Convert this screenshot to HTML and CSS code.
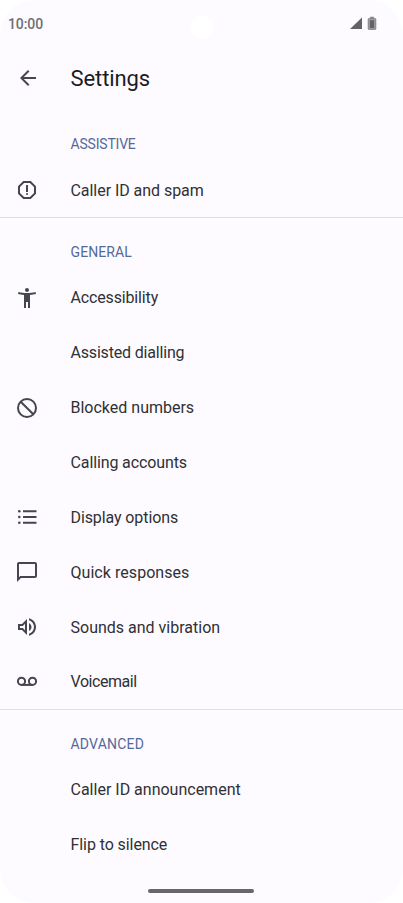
FILE: index.html
```
<!DOCTYPE html>
<html lang="en-GB">
<head>
<meta charset="utf-8">
<title>Settings</title>
<link rel="stylesheet" href="styles.css">
</head>
<body>
<main class="screen">
  <header class="status">
    <span class="time">10:00</span>
    <span class="camera"></span>
    <svg class="indicators" viewBox="0 0 28 14">
      <path d="M0 13 12 1.500v11.500z" fill="#636265"/>
      <path d="M20.200 .800h3.600v1.400h-3.600z" fill="#858487"/>
      <rect x="18.200" y="2.400" width="7.600" height="11.200" rx="1" fill="#9a999c" stroke="#777679" stroke-width=".8"/>
      <path d="M20 4.200h4V12h-4z" fill="#636265"/>
    </svg>
  </header>
  <div class="appbar">
    <svg class="icon" viewBox="0 0 24 24"><path d="M20 11H7.830l5.590-5.590L12 4l-8 8 8 8 1.410-1.410L7.830 13H20z"/></svg>
    <h1>Settings</h1>
  </div>
  <section class="assistive">
    <h2 class="h-assistive">ASSISTIVE</h2>
    <div class="row">
      <svg class="icon" viewBox="0 0 24 24"><path d="M15.730 3H8.270L3 8.270v7.460L8.270 21h7.460L21 15.730V8.270zM19 14.900 14.900 19H9.100L5 14.900V9.100L9.100 5h5.800L19 9.100z"/><circle cx="12" cy="16" r="1"/><path d="M11 7h2v7h-2z"/></svg>
      <span class="t-caller">Caller ID and spam</span>
    </div>
  </section>
  <section class="general">
    <h2 class="h-general">GENERAL</h2>
    <div class="row">
      <svg class="icon" viewBox="0 0 24 24"><path d="M20.500 6c-2.610.700-5.670 1-8.500 1s-5.890-.300-8.500-1L3 8c1.860.500 4 .830 6 1v13h2v-6h2v6h2V9c2-.170 4.140-.500 6-1zM12 6c1.100 0 2-.900 2-2s-.900-2-2-2-2 .900-2 2 .900 2 2 2z"/></svg>
      <span class="t-access">Accessibility</span>
    </div>
    <div class="row"><span class="t-dial">Assisted dialling</span></div>
    <div class="row">
      <svg class="icon" viewBox="0 0 24 24"><g class="line"><circle cx="12" cy="12" r="9"/><path d="m5.700 5.700 12.600 12.600"/></g></svg>
      <span class="t-block">Blocked numbers</span>
    </div>
    <div class="row"><span class="t-accounts">Calling accounts</span></div>
    <div class="row">
      <svg class="icon" viewBox="0 0 24 24"><circle cx="4.300" cy="6.200" r="1.300"/><circle cx="4.300" cy="12" r="1.300"/><circle cx="4.300" cy="17.800" r="1.300"/><path d="M8 5.200h13.500v2H8zM8 11h13.500v2H8zM8 16.800h13.500v2H8z"/></svg>
      <span class="t-display">Display options</span>
    </div>
    <div class="row">
      <svg class="icon" viewBox="0 0 24 24"><path d="M20 2H4c-1.100 0-2 .900-2 2v18l4-4h14c1.100 0 2-.900 2-2V4c0-1.100-.900-2-2-2zm0 14H5.200L4 17.200V4h16z"/></svg>
      <span class="t-quick">Quick responses</span>
    </div>
    <div class="row">
      <svg class="icon" viewBox="0 0 24 24"><path d="M3 9v6h4l5 5V4L7 9zm7-.170v6.340L7.830 13H5v-2h2.830zM16.500 12c0-1.770-1.020-3.290-2.500-4.030v8.050c1.480-.730 2.500-2.250 2.500-4.020zM14 3.230v2.060c2.890.860 5 3.540 5 6.710s-2.110 5.850-5 6.710v2.060c4.010-.910 7-4.490 7-8.770s-2.990-7.860-7-8.770z"/></svg>
      <span class="t-sound">Sounds and vibration</span>
    </div>
    <div class="row">
      <svg class="icon" viewBox="0 0 24 24"><g class="line"><circle cx="6.500" cy="11.300" r="3.600"/><circle cx="17.500" cy="11.300" r="3.600"/><path d="M6.500 14.900h11"/></g></svg>
      <span class="t-voice">Voicemail</span>
    </div>
  </section>
  <section class="advanced">
    <h2 class="h-advanced">ADVANCED</h2>
    <div class="row"><span class="t-announce">Caller ID announcement</span></div>
    <div class="row"><span class="t-flip">Flip to silence</span></div>
  </section>
  <div class="home"></div>
</main>
</body>
</html>
```
FILE: styles.css
```
body { margin: 0; background: #fff; font-family: Roboto, sans-serif; }
.screen { position: relative; width: 403px; height: 903px; box-sizing: border-box; overflow: hidden; background: #fdfbff; border-radius: 34px; }
.status { height: 48px; box-sizing: border-box; padding: 16px 25px 0 8px; display: flex; justify-content: space-between; align-items: flex-start; }
.time { font-size: 14px; line-height: 17px; font-weight: 500; color: #6f6e72; letter-spacing: -.1px; }
.camera { position: absolute; left: 190px; top: 16px; width: 23px; height: 23px; border-radius: 50%; background: #fff; }
.indicators { width: 28px; height: 14px; }
.appbar { height: 62.700px; display: flex; align-items: flex-start; padding-left: 15.500px; }
.appbar .icon { margin-top: 18.300px; }
h1 { margin: 16px 0 0 31px; font-size: 22px; line-height: 30px; font-weight: 400; color: #1c1b1f; letter-spacing: -.1px; }
section { border-bottom: 1px solid #e1dfe4; }
.advanced { border-bottom: 0; }
h2 { margin: 0; height: 51.800px; box-sizing: border-box; padding: 24px 0 0 70.500px; font-size: 14px; line-height: 20px; font-weight: 400; color: #55699a; }
.h-assistive { padding-top: 23.300px; letter-spacing: -.2px; }
.h-general { letter-spacing: .1px; }
.h-advanced { letter-spacing: .2px; }
.row { height: 54.860px; box-sizing: border-box; padding: .600px 0 0 70.500px; display: flex; align-items: center; font-size: 16px; color: #303034; white-space: nowrap; }
.icon { width: 24px; height: 24px; fill: #45464f; flex: none; }
.row .icon { margin: 0 31.500px 0 -55.500px; }
.line { fill: none; stroke: #45464f; stroke-width: 2; }
.t-caller { letter-spacing: -.05px; }
.t-access { letter-spacing: -.15px; }
.t-dial { letter-spacing: -.18px; }
.t-accounts { letter-spacing: -.12px; }
.t-display { letter-spacing: -.1px; }
.t-quick { letter-spacing: .05px; }
.t-voice { letter-spacing: -.45px; }
.t-flip { letter-spacing: -.08px; }
.home { position: absolute; left: 148px; top: 889px; width: 106px; height: 4px; border-radius: 2px; background: #67666a; }
```
